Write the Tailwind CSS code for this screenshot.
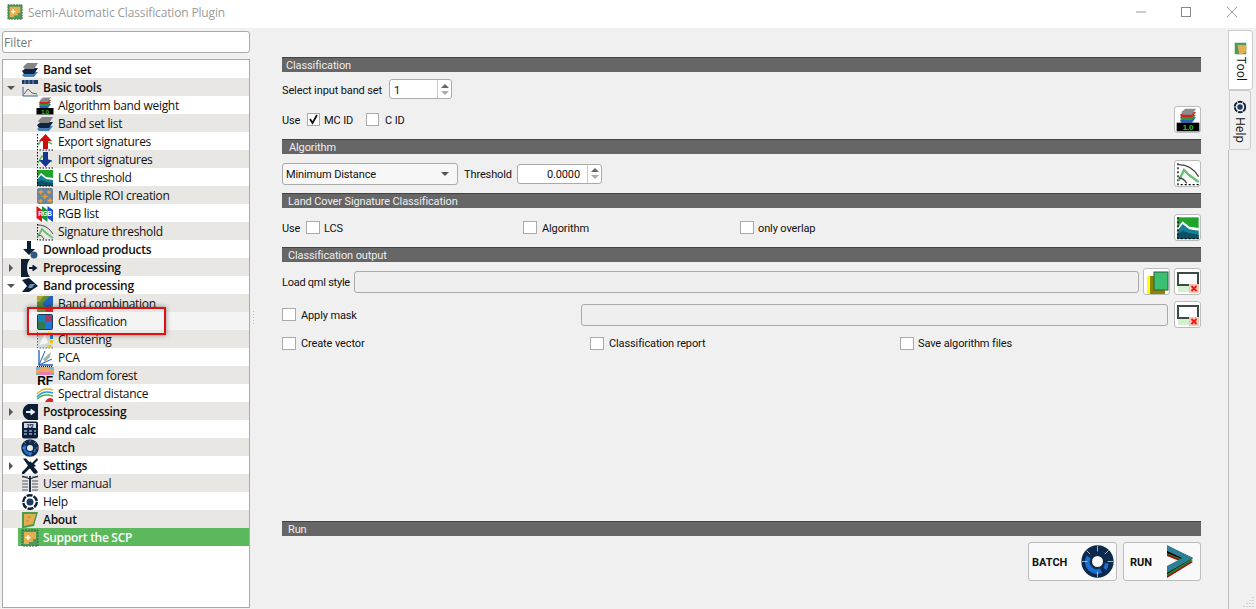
<!DOCTYPE html>
<html lang="en">
<head>
  <meta charset="UTF-8">
  <title>Semi-Automatic Classification Plugin</title>
  <script src="https://cdn.jsdelivr.net/npm/@tailwindcss/browser@4"></script>
</head>
<body class="bg-[#f0f0f0] text-[#111] font-['Open_Sans',sans-serif] text-[12px] overflow-hidden">

  <!-- icons -->
  <svg class="hidden">
    <symbol id="logo" viewBox="0 0 18 18">
      <rect x="1" y="1" width="16" height="16" fill="#4f9a58"/>
      <path d="M3 3H15V10L12 10V13H8V15H3Z" fill="#e3ad52"/>
      <path d="M7 6V11M4.500 8.500H9.500" stroke="#fff" stroke-width="1.500"/>
      <path d="M1 1H17V17H1Z" fill="none" stroke="#2d6b3a" stroke-dasharray="2 1"/>
    </symbol>
    <symbol id="bandset" viewBox="0 0 18 18">
      <path d="M1 14L5 11H17L13 16H3Z" fill="#4a7fb5"/>
      <path d="M1 10L5 7H17L13 13H3Z" fill="#10233f"/>
      <path d="M2 6L6 2H17L13 8H4Z" fill="#858585"/>
    </symbol>
    <symbol id="algweight" viewBox="0 0 18 18">
      <path d="M3 9L6 7H15L12 11H4Z" fill="#2a5fbf"/>
      <path d="M3 7L6 5H15L12 9H4Z" fill="#2c9a35"/>
      <path d="M3 5L6 3H15L12 7H4Z" fill="#d42020"/>
      <path d="M4 3L7 0.500H15L12 5H5Z" fill="#8c8c8c"/>
      <rect x="0.500" y="11" width="17" height="6.500" fill="#000"/>
      <text x="9" y="16.500" text-anchor="middle" font-size="6" font-weight="700" fill="#1ed01e" font-family="Liberation Sans">1.0</text>
    </symbol>
    <symbol id="basic" viewBox="0 0 18 18">
      <rect x="1" y="1" width="16" height="4" fill="#1d3a66"/>
      <path d="M4 1V5M8 1V5M12 1V5" stroke="#7f9cc4"/>
      <path d="M2 8V17H17" fill="none" stroke="#46607e"/>
      <path d="M3 15L7 10L11 14L16 15" fill="none" stroke="#46607e"/>
    </symbol>
    <symbol id="export" viewBox="0 0 18 18">
      <path d="M1.500 1V17H17" fill="none" stroke="#000" stroke-dasharray="1.500 1.500"/>
      <path d="M2 12L6 6L16 11" fill="none" stroke="#59b765" stroke-width="1.500"/>
      <path d="M9.500 1L16 8H12V16H7V8H3Z" fill="#cf0d0d"/>
    </symbol>
    <symbol id="import" viewBox="0 0 18 18">
      <path d="M1.500 1V17H17" fill="none" stroke="#000" stroke-dasharray="1.500 1.500"/>
      <path d="M2 12L6 5L16 11" fill="none" stroke="#59b765" stroke-width="1.500"/>
      <path d="M7 1H12V9H16L9.500 16L3 9H7Z" fill="#16358f"/>
    </symbol>
    <symbol id="lcs" viewBox="0 0 18 18">
      <rect x="1" y="1" width="16" height="16" fill="#1fa52c"/>
      <path d="M1 9L5 4L10 8L17 9V17H1Z" fill="#fff"/>
      <path d="M1 11L5 6L10 10L17 11V17H1Z" fill="#147f95"/>
      <path d="M1 14L5 11L10 13L17 14V17H1Z" fill="#0d4f63"/>
      <path d="M1.500 1V17H17" fill="none" stroke="#000" stroke-dasharray="1.500 1.500"/>
    </symbol>
    <symbol id="multiroi" viewBox="0 0 18 18">
      <rect x="1" y="1" width="16" height="16" rx="2" fill="#6a85a3"/>
      <path d="M5 2.500V7.500M2.500 5H7.500M13 3V7M11 5H15M9 7V12M6.500 9.500H11.500M4.500 12V16M2.500 14H6.500M14 11V16M11.500 13.500H16.500" stroke="#eaa42c" stroke-width="1.300"/>
    </symbol>
    <symbol id="rgb" viewBox="0 0 18 18">
      <path d="M0.500 1L6 5V17L0.500 13Z" fill="#e01414"/>
      <path d="M6 1L11.500 5V17L6 13Z" fill="#16983a"/>
      <path d="M11.500 1L17 5V17L11.500 13Z" fill="#1a4bd0"/>
      <text x="9" y="11" text-anchor="middle" font-size="6.500" font-weight="700" fill="#fff" font-family="Liberation Sans">RGB</text>
    </symbol>
    <symbol id="sigthr" viewBox="0 0 18 18">
      <path d="M1.500 1V17H17" fill="none" stroke="#000" stroke-dasharray="1.500 1.500"/>
      <path d="M2 2C9 2 14 6 17 11" fill="none" stroke="#444"/>
      <path d="M2 14L6 6L10 10L17 15" fill="none" stroke="#67bf74" stroke-width="1.800"/>
      <path d="M2 12C5 12 7 14 8 16" fill="none" stroke="#444"/>
    </symbol>
    <symbol id="download" viewBox="0 0 18 18">
      <path d="M6 0H10V8H14L8 14L2 8H6Z" fill="#0c1e33"/>
      <circle cx="13" cy="14" r="3.500" fill="#31587f"/>
    </symbol>
    <symbol id="preproc" viewBox="0 0 18 18">
      <path d="M9 0H0V18H9C5 14 5 4 9 0Z" fill="#0c1e33"/>
      <path d="M8 9H14M11.500 6.500L15 9L11.500 11.500" fill="none" stroke="#0c1e33" stroke-width="1.800"/>
    </symbol>
    <symbol id="bandproc" viewBox="0 0 18 18">
      <path d="M1 3L6 9L1 15H8L17 9L8 1Z" fill="#0c1e33"/>
      <path d="M7 11L9 7H14L11 11Z" fill="#6f8db0"/>
    </symbol>
    <symbol id="bandcomb" viewBox="0 0 18 18">
      <rect x="1" y="1" width="16" height="16" fill="#5e8d3a"/>
      <path d="M6 9L14 1H17V10L11 13Z" fill="#1e62c2"/>
      <path d="M1 1H8L3 7H1Z" fill="#b6a12c"/>
      <path d="M9 14L14 11L17 13V17H10Z" fill="#c92a2a"/>
    </symbol>
    <symbol id="classif" viewBox="0 0 18 18">
      <rect x="1" y="1" width="16" height="16" rx="2" fill="#1d3a57"/>
      <rect x="2" y="2" width="7" height="7" fill="#1f7fb0"/>
      <rect x="9" y="2" width="7" height="7" fill="#a83a5c"/>
      <rect x="2" y="9" width="7" height="7" fill="#2f7a52"/>
      <rect x="9" y="9" width="7" height="7" fill="#1f78d6"/>
    </symbol>
    <symbol id="cluster" viewBox="0 0 18 18">
      <rect x="1" y="1" width="16" height="16" fill="#d4dad6"/>
      <path d="M1.500 1V17H17" fill="none" stroke="#666" stroke-dasharray="1.500 1.500"/>
      <path d="M3 14L9 3L12 12Z" fill="#f5f5f5"/>
      <rect x="12" y="1" width="3" height="3" fill="#e6c81f"/>
      <rect x="14" y="4" width="3" height="4" fill="#1f7fd6"/>
      <rect x="14" y="9" width="3" height="3" fill="#e6c81f"/>
      <rect x="11" y="14" width="4" height="3" fill="#e6c81f"/>
    </symbol>
    <symbol id="pca" viewBox="0 0 18 18">
      <path d="M3 1V16H17" fill="none" stroke="#1f5fb5" stroke-width="1.300"/>
      <path d="M3 16L9 2M3 16L16 10" fill="none" stroke="#1f5fb5"/>
      <path d="M7 10L15 3L14 8L9 13Z" fill="#a9b3ad"/>
      <path d="M1 17.500H17" stroke="#000" stroke-dasharray="1 1"/>
    </symbol>
    <symbol id="rf" viewBox="0 0 18 18">
      <path d="M0 0H18V8H0Z" fill="#6fb3d9"/>
      <path d="M0 3L9 0L18 3V6H0Z" fill="#f0a25a"/>
      <path d="M3 5H15V8H3Z" fill="#e77fb0"/>
      <text x="9" y="17.500" text-anchor="middle" font-size="12" font-weight="700" fill="#000" font-family="Liberation Sans">RF</text>
    </symbol>
    <symbol id="spectral" viewBox="0 0 18 18">
      <path d="M1 9C6 3 11 3 17 5" fill="none" stroke="#e5b52f" stroke-width="1.500"/>
      <path d="M1 12C6 6 11 6 17 8" fill="none" stroke="#1c9de0" stroke-width="1.500"/>
      <path d="M1 14C6 9 11 9 17 11" fill="none" stroke="#48b24e" stroke-width="1.500"/>
      <path d="M9 17C11 13 14 12 17 14V17Z" fill="#d42a2a"/>
    </symbol>
    <symbol id="postproc" viewBox="0 0 18 18">
      <path d="M7 1H17V17H7C0 14 0 4 7 1Z" fill="#0c1e33"/>
      <path d="M5 9H12M9.500 6.500L13 9L9.500 11.500" fill="none" stroke="#e6edf5" stroke-width="1.800"/>
    </symbol>
    <symbol id="bandcalc" viewBox="0 0 18 18">
      <rect x="1" y="0.500" width="16" height="17" rx="2" fill="#0f1e38"/>
      <rect x="3" y="2" width="12" height="5" fill="#d8d8d8"/>
      <text x="9" y="6.500" text-anchor="middle" font-size="5" font-weight="700" fill="#000" font-family="Liberation Sans">1*2</text>
      <path d="M3 10H6M8 10H11M13 10H15M3 13H6M8 13H11M13 13H15" stroke="#6f7fae" stroke-width="2"/>
    </symbol>
    <symbol id="batch" viewBox="0 0 18 18">
      <circle cx="9" cy="9" r="5.900" fill="none" stroke="#0d2a4d" stroke-width="5.800"/>
      <path d="M4.200 6.500A5.300 5.300 0 0 0 11 14" fill="none" stroke="#1c6ed0" stroke-width="2.600"/>
      <path d="M14 10A5 5 0 0 1 13 13" fill="none" stroke="#1c6ed0" stroke-width="2"/>
      <path d="M9 0.500V3.500M0.500 9H3.500M14.500 9H17.500M9 14.500V17.500M3 3L5 5M15 3L13 5" stroke="#fff" stroke-width="0.350"/>
    </symbol>
    <symbol id="settings" viewBox="0 0 18 18">
      <path d="M2 1L5 1L16 13C17 14 17 16 15 16C14 17 13 16 12 15Z" fill="#0c1e33" transform="translate(0 0.500)"/>
      <path d="M16 1L17 3L13 7L15 9L8 12L3 17H1V15L6 10L9 4L11 6Z" fill="#0c1e33"/>
    </symbol>
    <symbol id="manual" viewBox="0 0 18 18">
      <path d="M9 1V17" stroke="#0c1e33" stroke-width="1.800"/>
      <path d="M1 2H7M1 6H7M1 9H7M1 12H7M1 15H7M11 2L17 2M11 6H17M11 9H17M11 12H17M11 15H17" stroke="#4a5566"/>
      <path d="M1 1L9 4L17 1" fill="none" stroke="#0c1e33"/>
    </symbol>
    <symbol id="help" viewBox="0 0 18 18">
      <circle cx="9" cy="9" r="6.800" fill="none" stroke="#0c1e33" stroke-width="2.400" stroke-dasharray="6 1.100"/>
      <circle cx="9" cy="9" r="3.500" fill="#1d3a66"/>
    </symbol>
    <symbol id="about" viewBox="0 0 18 18">
      <path d="M1 1H17L13 15L3 17H1Z" fill="#4a9a50"/>
      <path d="M3 3H15L12 13L3 15Z" fill="#e3ad52"/>
      <path d="M6 6H10M5 10H8" stroke="#b98a3a"/>
    </symbol>
    <symbol id="tab" viewBox="0 0 18 18">
      <rect x="1" y="1" width="16" height="16" fill="#4f9a58"/>
      <path d="M5 4H17V14L11 17H7Z" fill="#e3ad52"/>
    </symbol>
    <symbol id="qml" viewBox="0 0 24 24">
      <rect x="2" y="6" width="6" height="18" fill="#ffff00"/>
      <rect x="5" y="6" width="15" height="18" fill="#8c8400"/>
      <rect x="9" y="2" width="14" height="18" fill="#39c070" stroke="#2f5b45"/>
    </symbol>
    <symbol id="reset" viewBox="0 0 24 24">
      <rect x="2" y="15" width="12" height="7" fill="#d4f0d0"/>
      <path d="M2 16V3H22V14" fill="none" stroke="#3a4a44" stroke-width="2"/>
      <path d="M2 15H13" stroke="#3a4a44" stroke-width="2"/>
      <rect x="13" y="14" width="10" height="9" fill="#f0c8b4"/>
      <path d="M15.500 16L20.500 21M20.500 16L15.500 21" stroke="#f01414" stroke-width="1.800"/>
    </symbol>
    <symbol id="run" viewBox="0 0 28 34">
      <path d="M1 11L16 17L1 26V33L27 17L1 5Z" fill="#a01010"/>
      <path d="M1 9L16 15L1 24V31L27 15L1 3Z" fill="#1d8a2a"/>
      <path d="M1 8L16 14L1 23V29L27 13L1 1Z" fill="#000"/>
      <path d="M1 6L16 13L1 21V28L27 13L1 0Z" fill="#2d7f96"/>
    </symbol>
  </svg>

  <!-- title bar -->
  <div class="h-[28px] bg-white flex items-center pl-[7px] text-[#9b9b9b] tracking-[-0.15px]">
    <svg class="w-[16px] h-[16px] mr-[5px] mb-[4px]"><use href="#logo"/></svg>
    <span class="mb-[3px]">Semi-Automatic Classification Plugin</span>
    <svg class="ml-auto w-[12px] h-[12px] mr-[33px] mb-[4px]" viewBox="0 0 12 12"><path d="M1 6H11" stroke="#999"/></svg>
    <svg class="w-[12px] h-[12px] mr-[34px] mb-[4px]" viewBox="0 0 12 12"><rect x="1.500" y="1.500" width="9" height="9" fill="none" stroke="#888"/></svg>
    <svg class="w-[12px] h-[12px] mr-[18px] mb-[4px]" viewBox="0 0 12 12"><path d="M1 1L11 11M11 1L1 11" stroke="#999"/></svg>
  </div>

  <div class="relative flex h-[581px]">
    <!-- left column -->
    <div class="w-[250px] pl-[2px] pt-[3px] shrink-0">
      <div class="h-[22px] bg-white border border-[#aaa] rounded-[3px] flex items-center pl-[1px] pt-[2px] text-[#777]">Filter</div>
      <div class="relative mt-[6px] h-[549px] bg-white border border-[#aaa] tracking-[-0.3px] [&>div]:pt-[2px]">
        <div class="flex items-center h-[18px] font-semibold"><span class="w-[18px]"></span><svg class="w-[18px] h-[18px] mr-[4px]"><use href="#bandset"/></svg>Band set</div>
        <div class="flex items-center h-[18px] font-semibold bg-[#e9e7e3]"><span class="w-[18px] pl-[4px]"><span class="block w-0 h-0 border-x-[4px] border-x-transparent border-t-[4px] border-t-[#555]"></span></span><svg class="w-[18px] h-[18px] mr-[4px]"><use href="#basic"/></svg>Basic tools</div>
        <div class="flex items-center h-[18px]"><svg class="ml-[33px] w-[18px] h-[18px] mr-[4px]"><use href="#algweight"/></svg>Algorithm band weight</div>
        <div class="flex items-center h-[18px] bg-[#e9e7e3]"><svg class="ml-[33px] w-[18px] h-[18px] mr-[4px]"><use href="#bandset"/></svg>Band set list</div>
        <div class="flex items-center h-[18px]"><svg class="ml-[33px] w-[18px] h-[18px] mr-[4px]"><use href="#export"/></svg>Export signatures</div>
        <div class="flex items-center h-[18px] bg-[#e9e7e3]"><svg class="ml-[33px] w-[18px] h-[18px] mr-[4px]"><use href="#import"/></svg>Import signatures</div>
        <div class="flex items-center h-[18px]"><svg class="ml-[33px] w-[18px] h-[18px] mr-[4px]"><use href="#lcs"/></svg>LCS threshold</div>
        <div class="flex items-center h-[18px] bg-[#e9e7e3]"><svg class="ml-[33px] w-[18px] h-[18px] mr-[4px]"><use href="#multiroi"/></svg>Multiple ROI creation</div>
        <div class="flex items-center h-[18px]"><svg class="ml-[33px] w-[18px] h-[18px] mr-[4px]"><use href="#rgb"/></svg>RGB list</div>
        <div class="flex items-center h-[18px] bg-[#e9e7e3]"><svg class="ml-[33px] w-[18px] h-[18px] mr-[4px]"><use href="#sigthr"/></svg>Signature threshold</div>
        <div class="flex items-center h-[18px] font-semibold"><span class="w-[18px]"></span><svg class="w-[18px] h-[18px] mr-[4px]"><use href="#download"/></svg>Download products</div>
        <div class="flex items-center h-[18px] font-semibold bg-[#e9e7e3]"><span class="w-[18px] pl-[6px]"><span class="block w-0 h-0 border-y-[4px] border-y-transparent border-l-[4px] border-l-[#555]"></span></span><svg class="w-[18px] h-[18px] mr-[4px]"><use href="#preproc"/></svg>Preprocessing</div>
        <div class="flex items-center h-[18px] font-semibold"><span class="w-[18px] pl-[4px]"><span class="block w-0 h-0 border-x-[4px] border-x-transparent border-t-[4px] border-t-[#555]"></span></span><svg class="w-[18px] h-[18px] mr-[4px]"><use href="#bandproc"/></svg>Band processing</div>
        <div class="flex items-center h-[18px] bg-[#e9e7e3]"><svg class="ml-[33px] w-[18px] h-[18px] mr-[4px]"><use href="#bandcomb"/></svg>Band combination</div>
        <div class="flex items-center h-[18px] bg-[#f4f4f4]"><svg class="ml-[33px] w-[18px] h-[18px] mr-[4px]"><use href="#classif"/></svg>Classification</div>
        <div class="flex items-center h-[18px] bg-[#e9e7e3]"><svg class="ml-[33px] w-[18px] h-[18px] mr-[4px]"><use href="#cluster"/></svg>Clustering</div>
        <div class="flex items-center h-[18px]"><svg class="ml-[33px] w-[18px] h-[18px] mr-[4px]"><use href="#pca"/></svg>PCA</div>
        <div class="flex items-center h-[18px] bg-[#e9e7e3]"><svg class="ml-[33px] w-[18px] h-[18px] mr-[4px]"><use href="#rf"/></svg>Random forest</div>
        <div class="flex items-center h-[18px]"><svg class="ml-[33px] w-[18px] h-[18px] mr-[4px]"><use href="#spectral"/></svg>Spectral distance</div>
        <div class="flex items-center h-[18px] font-semibold bg-[#e9e7e3]"><span class="w-[18px] pl-[6px]"><span class="block w-0 h-0 border-y-[4px] border-y-transparent border-l-[4px] border-l-[#555]"></span></span><svg class="w-[18px] h-[18px] mr-[4px]"><use href="#postproc"/></svg>Postprocessing</div>
        <div class="flex items-center h-[18px] font-semibold"><span class="w-[18px]"></span><svg class="w-[18px] h-[18px] mr-[4px]"><use href="#bandcalc"/></svg>Band calc</div>
        <div class="flex items-center h-[18px] font-semibold bg-[#e9e7e3]"><span class="w-[18px]"></span><svg class="w-[18px] h-[18px] mr-[4px]"><use href="#batch"/></svg>Batch</div>
        <div class="flex items-center h-[18px] font-semibold"><span class="w-[18px] pl-[6px]"><span class="block w-0 h-0 border-y-[4px] border-y-transparent border-l-[4px] border-l-[#555]"></span></span><svg class="w-[18px] h-[18px] mr-[4px]"><use href="#settings"/></svg>Settings</div>
        <div class="flex items-center h-[18px] bg-[#e9e7e3]"><span class="w-[18px]"></span><svg class="w-[18px] h-[18px] mr-[4px]"><use href="#manual"/></svg>User manual</div>
        <div class="flex items-center h-[18px]"><span class="w-[18px]"></span><svg class="w-[18px] h-[18px] mr-[4px]"><use href="#help"/></svg>Help</div>
        <div class="flex items-center h-[18px] font-semibold bg-[#e9e7e3]"><span class="w-[18px]"></span><svg class="w-[18px] h-[18px] mr-[4px]"><use href="#about"/></svg>About</div>
        <div class="flex items-center h-[18px] font-semibold text-white !pt-0"><span class="w-[15px]"></span><span class="flex items-center flex-1 h-full bg-[#5cb85c] pl-[3px] pt-[2px]"><svg class="w-[18px] h-[18px] mr-[4px]"><use href="#logo"/></svg>Support the SCP</span></div>
        <!-- red annotation box -->
        <div class="absolute left-[24px] top-[247px] w-[139px] h-[28px] border-[2px] border-[#e01010] shadow-[0_0_5px_rgba(0,0,0,0.45)]"></div>
      </div>
    </div>

    <!-- main panel -->
    <div class="w-[951px] pl-[32px] pt-[29px] shrink-0 font-['Roboto',sans-serif] text-[11px] tracking-[-0.12px]">
      <div class="h-[15px] bg-[#666] border-t border-t-[#444] text-[#eee] leading-[16px] pl-[4px]">Classification</div>
      <div class="flex items-center h-[20px] mt-[7px]">
        <span class="w-[107px] pt-[4px]">Select input band set</span>
        <div class="w-[63px] h-[20px] bg-white border border-[#aaa] rounded-[3px] flex items-center pl-[4px] pt-[4px] relative">1
          <span class="absolute right-0 top-0 bottom-0 w-[14px] border-l border-l-[#ccc] flex flex-col items-center justify-center gap-[3px]"><span class="w-0 h-0 border-x-[4px] border-x-transparent border-b-[4px] border-b-[#666]"></span><span class="w-0 h-0 border-x-[4px] border-x-transparent border-t-[4px] border-t-[#aaa]"></span></span>
        </div>
      </div>
      <div class="flex items-center h-[27px] mt-[7px]">
        <span class="w-[25px] pt-[4px]">Use</span>
        <span class="w-[13px] h-[13px] bg-white border border-[#aaa] flex items-center justify-center"><svg class="w-[11px] h-[11px]" viewBox="0 0 11 11"><path d="M2 5L4.500 9L9 1" fill="none" stroke="#111" stroke-width="1.800"/></svg></span>
        <span class="ml-[4px] w-[42px] pt-[4px]">MC ID</span>
        <span class="w-[13px] h-[13px] bg-white border border-[#aaa]"></span>
        <span class="ml-[6px] pt-[4px]">C ID</span>
        <div class="ml-auto w-[27px] h-[27px] bg-white border border-[#bbb] rounded-[3px] flex items-center justify-center"><svg class="w-[24px] h-[24px]"><use href="#algweight"/></svg></div>
      </div>
      <div class="h-[15px] bg-[#666] border-t border-t-[#444] text-[#eee] leading-[16px] pl-[7px] mt-[6px]">Algorithm</div>
      <div class="flex items-center h-[27px] mt-[6px]">
        <div class="w-[176px] h-[22px] bg-[#f7f7f7] border border-[#aaa] rounded-[3px] flex items-center justify-between pl-[3px] pr-[8px]"><span class="pt-[4px]">Minimum Distance</span><span class="w-0 h-0 border-x-[4px] border-x-transparent border-t-[4px] border-t-[#555]"></span></div>
        <span class="ml-[6px] w-[53px] pt-[4px]">Threshold</span>
        <div class="w-[85px] h-[20px] bg-white border border-[#aaa] rounded-[3px] flex items-center justify-end pr-[21px] pt-[4px] relative">0.0000
          <span class="absolute right-0 top-0 bottom-0 w-[14px] border-l border-l-[#ccc] flex flex-col items-center justify-center gap-[3px]"><span class="w-0 h-0 border-x-[4px] border-x-transparent border-b-[4px] border-b-[#666]"></span><span class="w-0 h-0 border-x-[4px] border-x-transparent border-t-[4px] border-t-[#aaa]"></span></span>
        </div>
        <div class="ml-auto w-[27px] h-[27px] bg-white border border-[#bbb] rounded-[3px] flex items-center justify-center"><svg class="w-[24px] h-[24px]"><use href="#sigthr"/></svg></div>
      </div>
      <div class="h-[15px] bg-[#666] border-t border-t-[#444] text-[#eee] leading-[16px] pl-[6px] mt-[6px]">Land Cover Signature Classification</div>
      <div class="flex items-center h-[27px] mt-[6px]">
        <span class="w-[24px] pt-[4px]">Use</span>
        <span class="w-[14px] h-[13px] bg-white border border-[#aaa]"></span>
        <span class="ml-[4px] w-[199px] pt-[4px]">LCS</span>
        <span class="w-[14px] h-[13px] bg-white border border-[#aaa]"></span>
        <span class="ml-[5px] w-[198px] pt-[4px]">Algorithm</span>
        <span class="w-[14px] h-[13px] bg-white border border-[#aaa]"></span>
        <span class="ml-[4px] pt-[4px]">only overlap</span>
        <div class="ml-auto w-[27px] h-[27px] bg-white border border-[#bbb] rounded-[3px] flex items-center justify-center"><svg class="w-[24px] h-[24px]"><use href="#lcs"/></svg></div>
      </div>
      <div class="h-[15px] bg-[#666] border-t border-t-[#444] text-[#eee] leading-[16px] pl-[6px] mt-[6px]">Classification output</div>
      <div class="flex items-center h-[27px] mt-[6px]">
        <span class="w-[72px] whitespace-nowrap tracking-[-0.25px] pt-[4px]">Load qml style</span>
        <div class="w-[785px] h-[22px] bg-[#efefef] border border-[#aaa] rounded-[3px]"></div>
        <div class="ml-[4px] w-[27px] h-[27px] bg-white border border-[#bbb] rounded-[3px] flex items-center justify-center"><svg class="w-[24px] h-[24px]"><use href="#qml"/></svg></div>
        <div class="ml-auto w-[27px] h-[27px] bg-white border border-[#bbb] rounded-[3px] flex items-center justify-center"><svg class="w-[24px] h-[24px]"><use href="#reset"/></svg></div>
      </div>
      <div class="flex items-center h-[27px] mt-[6px]">
        <span class="w-[14px] h-[13px] bg-white border border-[#aaa]"></span>
        <span class="ml-[5px] w-[280px] pt-[4px]">Apply mask</span>
        <div class="w-[587px] h-[22px] bg-[#efefef] border border-[#aaa] rounded-[3px]"></div>
        <div class="ml-auto w-[27px] h-[27px] bg-white border border-[#bbb] rounded-[3px] flex items-center justify-center"><svg class="w-[24px] h-[24px]"><use href="#reset"/></svg></div>
      </div>
      <div class="flex items-center h-[14px] mt-[8px]">
        <span class="w-[14px] h-[13px] bg-white border border-[#aaa]"></span>
        <span class="ml-[5px] w-[289px] pt-[3px]">Create vector</span>
        <span class="w-[14px] h-[13px] bg-white border border-[#aaa]"></span>
        <span class="ml-[5px] w-[291px] pt-[3px]">Classification report</span>
        <span class="w-[14px] h-[13px] bg-white border border-[#aaa]"></span>
        <span class="ml-[4px] pt-[3px]">Save algorithm files</span>
      </div>
      <div class="h-[15px] bg-[#666] border-t border-t-[#444] text-[#eee] leading-[16px] pl-[6px] mt-[171px]">Run</div>
      <div class="flex justify-end gap-[6px] mt-[6px]">
        <div class="w-[89px] h-[39px] bg-[#f9f9f9] border border-[#bbb] rounded-[3px] flex items-center justify-between pl-[3px] pr-[2px] font-bold text-[#111] tracking-normal"><span class="pt-[3px]">BATCH</span><svg class="w-[33px] h-[33px]"><use href="#batch"/></svg></div>
        <div class="w-[78px] h-[39px] bg-[#f9f9f9] border border-[#bbb] rounded-[3px] flex items-center justify-between pl-[6px] pr-[6px] font-bold text-[#111] tracking-normal"><span class="pt-[3px]">RUN</span><svg class="w-[28px] h-[34px]"><use href="#run"/></svg></div>
      </div>
    </div>

    <!-- side tabs -->
    <div class="ml-[27px] w-[28px] shrink-0 relative border-l border-l-[#bbb] mt-[122px]">
      <div class="absolute left-[-1px] top-[-120px] w-[25px] h-[60px] bg-white border border-[#ccc] rounded-r-[3px] flex flex-col items-center pt-[11px]">
        <svg class="w-[13px] h-[13px]"><use href="#tab"/></svg>
        <span class="[writing-mode:vertical-rl] mt-[2px]">Tool</span>
      </div>
      <div class="absolute left-[0px] top-[-60px] w-[22px] h-[60px] bg-[#f0f0f0] border border-[#ccc] rounded-r-[3px] flex flex-col items-center pt-[9px]">
        <svg class="w-[14px] h-[14px]"><use href="#help"/></svg>
        <span class="[writing-mode:vertical-rl] mt-[3px]">Help</span>
      </div>
    </div>

    <!-- splitter handle and size grip -->
    <svg class="absolute left-[252px] top-[283px] w-[3px] h-[15px]" viewBox="0 0 3 15"><path d="M1.500 0V15" stroke="#bbb" stroke-dasharray="1 2"/></svg>
    <svg class="absolute right-[1px] bottom-[1px] w-[12px] h-[12px]" viewBox="0 0 12 12"><path d="M10 1V2M7 4V5M10 4V5M4 7V8M7 7V8M10 7V8M1 10V11M4 10V11M7 10V11M10 10V11" stroke="#c4c4c4" stroke-width="1.500"/></svg>
  </div>
</body>
</html>
